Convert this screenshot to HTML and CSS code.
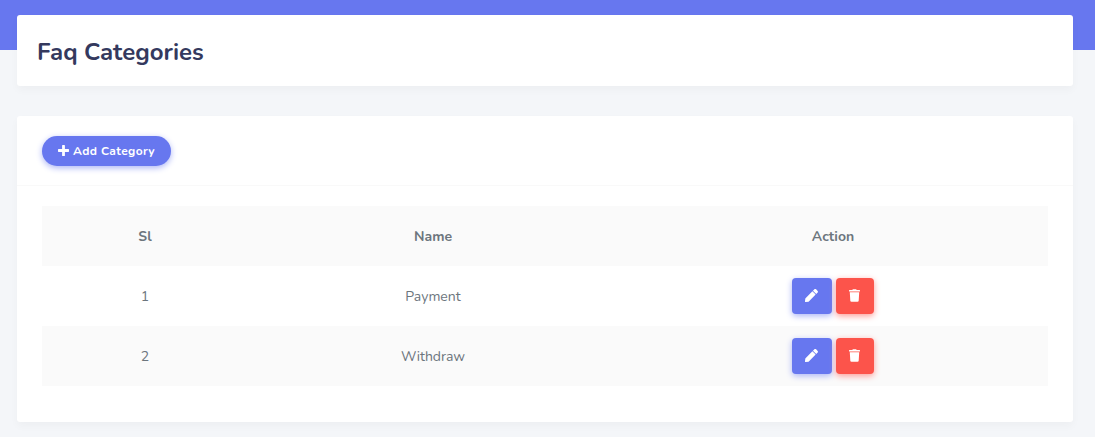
FILE: index.html
```html
<!DOCTYPE html>
<html lang="en">
<head>
<meta charset="utf-8">
<title>Faq Categories</title>
<link rel="stylesheet" href="styles.css">
</head>
<body>
<svg width="0" height="0" class="sprite">
  <symbol id="pen" viewBox="0 0 512 512"><path d="M290.74 93.24l128.02 128.02-277.99 277.99-114.14 12.6C11.35 513.54-1.56 500.62.14 485.34l12.7-114.22 277.9-277.88zm207.2-19.06l-60.11-60.11c-18.75-18.75-49.16-18.75-67.91 0l-56.55 56.55 128.02 128.02 56.55-56.55c18.75-18.76 18.75-49.16 0-67.91z"/></symbol>
  <symbol id="trash" viewBox="0 0 448 512"><path d="M432 32H312l-9.4-18.7A24 24 0 0 0 281.1 0H166.8a23.72 23.72 0 0 0-21.4 13.3L136 32H16A16 16 0 0 0 0 48v32a16 16 0 0 0 16 16h416a16 16 0 0 0 16-16V48a16 16 0 0 0-16-16zM53.2 467a48 48 0 0 0 47.9 45h245.8a48 48 0 0 0 47.9-45L416 128H32z"/></symbol>
</svg>
<main class="content">
  <header class="card page-header"><h1 class="title">Faq Categories</h1></header>
  <section class="card">
    <div class="card-header">
      <a class="add-button"><svg class="plus" viewBox="0 0 11 11"><path d="M4.700 0h1.600q.6 0 .6.6v3.500h3.500q.6 0 .6.6v1.600q0 .6-.6.6H6.900v3.500q0 .6-.6.6H4.700q-.6 0-.6-.6V6.900H.6q-.6 0-.6-.6V4.700q0-.6.6-.6h3.500V.6q0-.6.6-.6z"/></svg><span>Add Category</span></a>
    </div>
    <div class="card-body">
      <table class="table">
        <colgroup><col class="col-sl"><col class="col-name"><col></colgroup>
        <thead><tr class="shaded"><th>Sl</th><th>Name</th><th>Action</th></tr></thead>
        <tbody>
          <tr><td>1</td><td>Payment</td><td class="action-cell"><div class="actions"><a class="btn edit"><svg class="pen"><use href="#pen"/></svg></a><a class="btn delete"><svg class="trash"><use href="#trash"/></svg></a></div></td></tr>
          <tr class="shaded"><td>2</td><td>Withdraw</td><td class="action-cell"><div class="actions"><a class="btn edit"><svg class="pen"><use href="#pen"/></svg></a><a class="btn delete"><svg class="trash"><use href="#trash"/></svg></a></div></td></tr>
        </tbody>
      </table>
    </div>
  </section>
</main>
</body>
</html>
```
FILE: styles.css
```css
* { box-sizing: border-box; }
body {
  margin: 0;
  height: 437px;
  overflow: hidden;
  background: linear-gradient(#6777ef 50px, #f4f6f9 50px);
  color: #6c757d;
  font: 14px/24px Nunito, Lato, "Open Sans", sans-serif;
}
svg { fill: currentColor; display: block; }
.sprite { position: absolute; }
.content {
  display: flex;
  flex-direction: column;
  gap: 30px;
  padding: 15px 22px 15px 17px;
}
.card {
  background: #fff;
  border-radius: 3px;
  box-shadow: 0 4px 8px rgba(0, 0, 0, .03);
}
.page-header { height: 71px; padding: 23px 20px 0; }
.title {
  margin: 0;
  color: #34395e;
  font-size: 24px;
  line-height: 28px;
  font-weight: 700;
}
.card-header {
  height: 70px;
  padding: 20px 25px;
  border-bottom: 1px solid #f9f9f9;
}
.add-button {
  display: flex;
  align-items: center;
  gap: 4px;
  width: 129px;
  height: 30px;
  padding-left: 16px;
  border-radius: 30px;
  background: #6777ef;
  color: #fff;
  font-size: 12px;
  font-weight: 700;
  letter-spacing: .37px;
  white-space: nowrap;
  box-shadow: 0 2px 6px #acb5f6;
}
.plus { width: 11px; height: 11px; margin-bottom: 1px; }
.card-body { padding: 20px 25px 36px; }
.table {
  width: 100%;
  table-layout: fixed;
  border-collapse: collapse;
  text-align: center;
}
.col-sl { width: 206px; }
.col-name { width: 370px; }
.table th, .table td { height: 60px; padding: 2px 0 0; }
.table th { font-weight: 700; }
.table .action-cell { padding: 0; }
.shaded { background: #fafafa; }
.actions { display: flex; justify-content: center; gap: 4px; }
.btn {
  display: flex;
  align-items: center;
  justify-content: center;
  width: 40px;
  height: 36px;
  padding: 0 1px 1px 0;
  border-radius: 4px;
  color: #fff;
}
.edit { background: #6777ef; box-shadow: 0 2px 6px #acb5f6; }
.delete { width: 38px; background: #fc544b; box-shadow: 0 2px 6px #fd9b96; }
.pen { width: 13px; height: 13px; }
.trash { width: 11px; height: 13px; }
```
